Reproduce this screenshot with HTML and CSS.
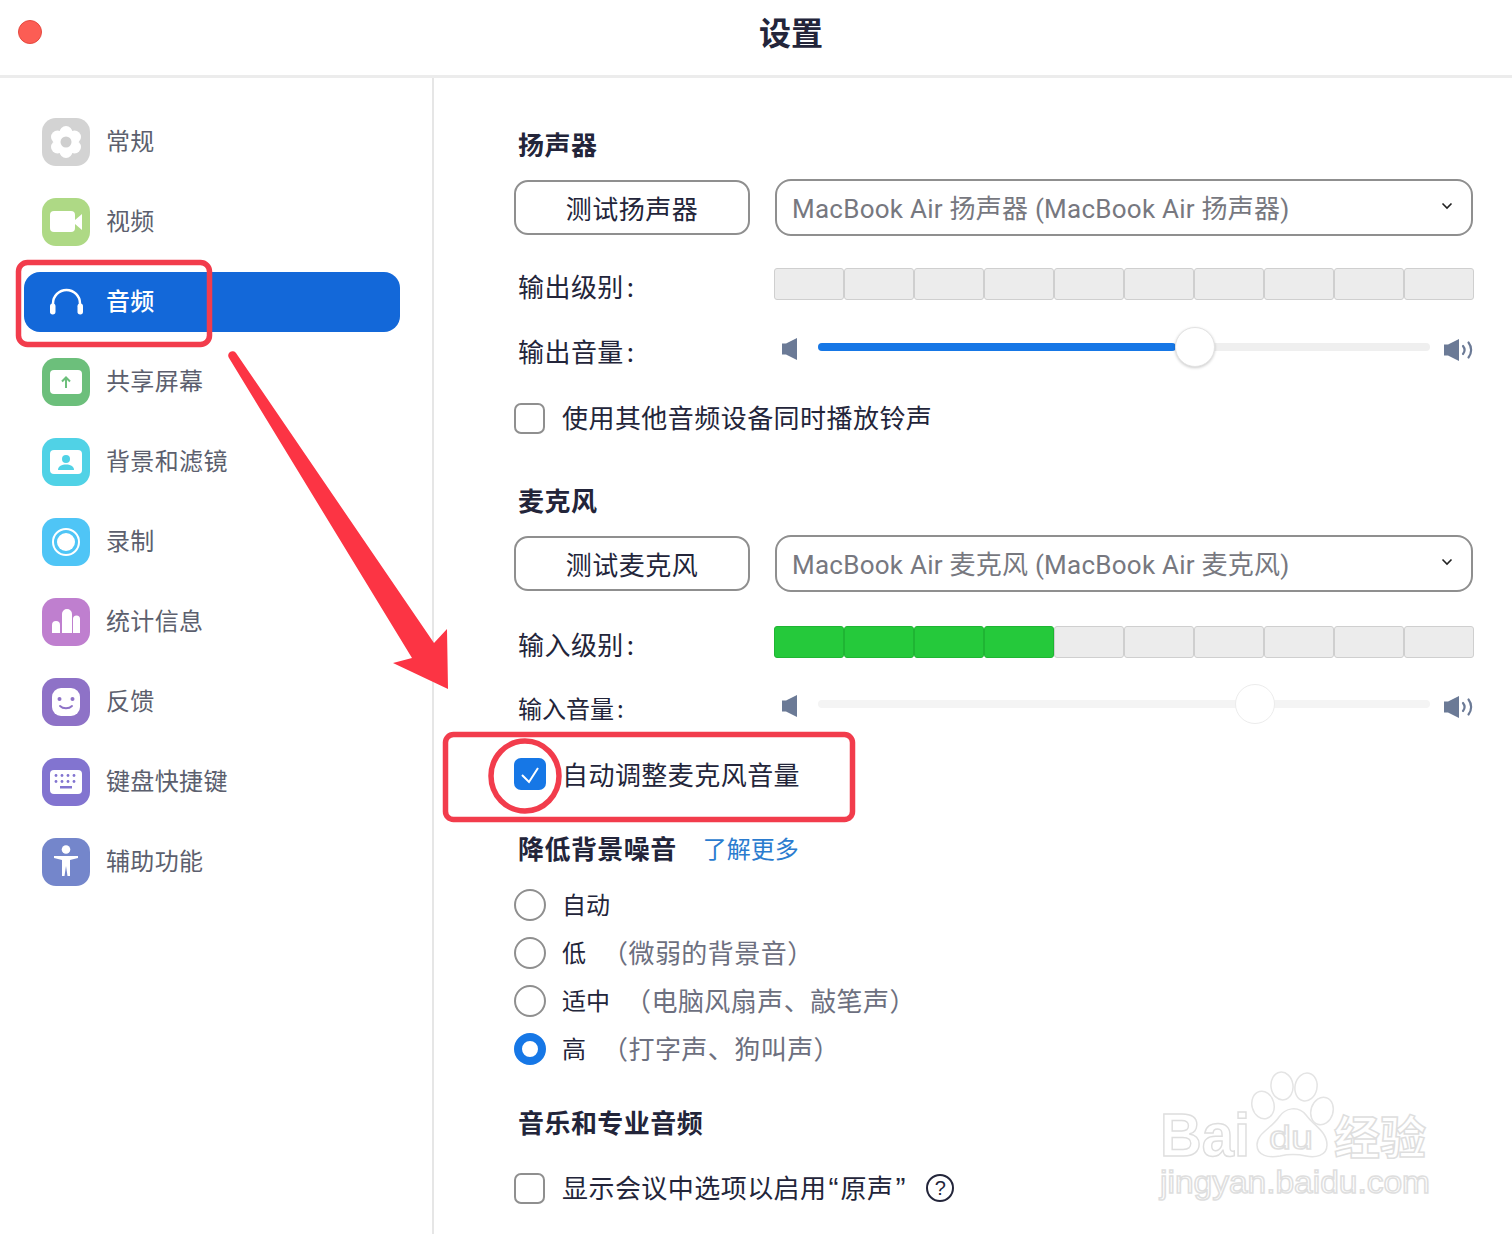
FILE: index.html
```html
<!DOCTYPE html>
<html lang="zh-CN">
<head>
    <meta charset="UTF-8">
    <title>设置</title>
    <link rel="stylesheet" href="styles.css">
</head>
<body>
    <div class="window">
        <header class="titlebar">
            <span class="close-dot"></span>
            <h1>设置</h1>
        </header>
        <div class="layout">
            <nav class="sidebar">
                <a class="nav-item">
                    <svg class="nav-icon" viewBox="0 0 48 48"><rect width="48" height="48" rx="14" fill="#d3d3d3"/><g fill="#fff"><circle cx="24" cy="14.500" r="6.500"/><circle cx="24" cy="33.500" r="6.500"/><circle cx="15.500" cy="19" r="6.500"/><circle cx="32.500" cy="19" r="6.500"/><circle cx="15.500" cy="29" r="6.500"/><circle cx="32.500" cy="29" r="6.500"/><circle cx="24" cy="24" r="10"/></g><circle cx="24" cy="24" r="5.500" fill="#cfcfcf"/></svg>
                    <span>常规</span>
                </a>
                <a class="nav-item">
                    <svg class="nav-icon" viewBox="0 0 48 48"><rect width="48" height="48" rx="14" fill="#aed985"/><rect x="8" y="13" width="25" height="21" rx="4" fill="#fff"/><path d="M33 22l7-6v16l-7-6z" fill="#fff"/></svg>
                    <span>视频</span>
                </a>
                <a class="nav-item active">
                    <svg class="nav-icon" viewBox="0 0 48 48"><path d="M11 33V25.500a13.500 13.500 0 0 1 27 0V33" fill="none" stroke="#fff" stroke-width="2.500"/><rect x="8" y="25.500" width="5.500" height="11" rx="2.700" fill="#fff"/><rect x="35.500" y="25.500" width="5.500" height="11" rx="2.700" fill="#fff"/></svg>
                    <span>音频</span>
                </a>
                <a class="nav-item">
                    <svg class="nav-icon" viewBox="0 0 48 48"><rect width="48" height="48" rx="14" fill="#6cbf7b"/><rect x="8" y="12" width="32" height="24" rx="4" fill="#fff"/><path d="M24 30v-10M20 23.500l4-4 4 4" fill="none" stroke="#6cbf7b" stroke-width="2"/></svg>
                    <span>共享屏幕</span>
                </a>
                <a class="nav-item">
                    <svg class="nav-icon" viewBox="0 0 48 48"><rect width="48" height="48" rx="14" fill="#50d2e6"/><rect x="8" y="12" width="32" height="24" rx="4" fill="#fff"/><circle cx="24" cy="21" r="4" fill="#50d2e6"/><path d="M16 32c0-4 4-5.500 8-5.500s8 1.500 8 5.500z" fill="#50d2e6"/></svg>
                    <span>背景和滤镜</span>
                </a>
                <a class="nav-item">
                    <svg class="nav-icon" viewBox="0 0 48 48"><rect width="48" height="48" rx="14" fill="#4fc5f6"/><circle cx="24" cy="24" r="13" fill="none" stroke="#fff" stroke-width="2"/><circle cx="24" cy="24" r="9" fill="#fff"/></svg>
                    <span>录制</span>
                </a>
                <a class="nav-item">
                    <svg class="nav-icon" viewBox="0 0 48 48"><rect width="48" height="48" rx="14" fill="#bf7fcf"/><path d="M10 35v-8a4 4 0 0 1 8 0v8zM20 35V16a5 5 0 0 1 10 0v19zM31 35V21a3.500 3.500 0 0 1 7 0v14z" fill="#fff"/></svg>
                    <span>统计信息</span>
                </a>
                <a class="nav-item">
                    <svg class="nav-icon" viewBox="0 0 48 48"><rect width="48" height="48" rx="14" fill="#8e72c7"/><rect x="10" y="10" width="28" height="28" rx="9" fill="#fff"/><circle cx="17.500" cy="21" r="2" fill="#8e72c7"/><circle cx="30.500" cy="21" r="2" fill="#8e72c7"/><path d="M18 28c3 3 9 3 12 0" fill="none" stroke="#8e72c7" stroke-width="1.800" stroke-linecap="round"/></svg>
                    <span>反馈</span>
                </a>
                <a class="nav-item">
                    <svg class="nav-icon" viewBox="0 0 48 48"><rect width="48" height="48" rx="14" fill="#8274d0"/><rect x="8" y="12" width="32" height="24" rx="4" fill="#fff"/><g fill="#8274d0"><circle cx="14" cy="17.500" r="1.400"/><circle cx="20" cy="17.500" r="1.400"/><circle cx="26" cy="17.500" r="1.400"/><circle cx="32" cy="17.500" r="1.400"/><circle cx="14" cy="23.500" r="1.400"/><circle cx="20" cy="23.500" r="1.400"/><circle cx="26" cy="23.500" r="1.400"/><circle cx="32" cy="23.500" r="1.400"/><rect x="18" y="28" width="12" height="2.500"/></g></svg>
                    <span>键盘快捷键</span>
                </a>
                <a class="nav-item">
                    <svg class="nav-icon" viewBox="0 0 48 48"><rect width="48" height="48" rx="14" fill="#7486cb"/><circle cx="24" cy="11.500" r="4.300" fill="#fff"/><path d="M12 18h24v2l-8 2v16h-2.500l-1.500-10-1.500 10H20V22l-8-2z" fill="#fff"/></svg>
                    <span>辅助功能</span>
                </a>
            </nav>

            <main class="content">
                <h2 class="section-title first">扬声器</h2>
                <div class="device-row">
                    <button class="test-btn">测试扬声器</button>
                    <div class="device-select">
                        <span>MacBook Air 扬声器 (MacBook Air 扬声器)</span>
                        <svg class="chevron" viewBox="0 0 12 8"><path d="M1.500 1.500L6 6l4.500-4.500" fill="none" stroke="#222" stroke-width="1.600"/></svg>
                    </div>
                </div>
                <div class="level-row output-level">
                    <span class="field-label">输出级别<span class="colon">:</span></span>
                    <div class="meter">
                        <i></i><i></i><i></i><i></i><i></i><i></i><i></i><i></i><i></i><i></i>
                    </div>
                </div>
                <div class="slider-row output-volume">
                    <span class="field-label">输出音量<span class="colon">:</span></span>
                    <svg class="vol-low" viewBox="0 0 16 22"><path d="M0 5.500h4l11-5.500v22l-11-5.500H0z" fill="#6b7a96"/></svg>
                    <div class="slider">
                        <div class="slider-fill"></div>
                        <div class="slider-thumb"></div>
                    </div>
                    <svg class="vol-high" viewBox="0 0 30 22"><path d="M0 5.500h4l11-5.500v22l-11-5.500H0z" fill="#6b7a96"/><path d="M19 7c2 2.500 2 5.500 0 8M24.500 3.500c3.500 4.500 3.500 10.500 0 15" fill="none" stroke="#6b7a96" stroke-width="2.200" stroke-linecap="round"/></svg>
                </div>
                <label class="check-row ringtone">
                    <span class="checkbox"></span>
                    <span class="check-text">使用其他音频设备同时播放铃声</span>
                </label>

                <h2 class="section-title mic-title">麦克风</h2>
                <div class="device-row">
                    <button class="test-btn">测试麦克风</button>
                    <div class="device-select">
                        <span>MacBook Air 麦克风 (MacBook Air 麦克风)</span>
                        <svg class="chevron" viewBox="0 0 12 8"><path d="M1.500 1.500L6 6l4.500-4.500" fill="none" stroke="#222" stroke-width="1.600"/></svg>
                    </div>
                </div>
                <div class="level-row input-level">
                    <span class="field-label">输入级别<span class="colon">:</span></span>
                    <div class="meter">
                        <i class="on"></i><i class="on"></i><i class="on"></i><i class="on"></i><i></i><i></i><i></i><i></i><i></i><i></i>
                    </div>
                </div>
                <div class="slider-row input-volume">
                    <span class="field-label small-label">输入音量<span class="colon">:</span></span>
                    <svg class="vol-low" viewBox="0 0 16 22"><path d="M0 5.500h4l11-5.500v22l-11-5.500H0z" fill="#6b7a96"/></svg>
                    <div class="slider">
                        <div class="slider-thumb"></div>
                    </div>
                    <svg class="vol-high" viewBox="0 0 30 22"><path d="M0 5.500h4l11-5.500v22l-11-5.500H0z" fill="#6b7a96"/><path d="M19 7c2 2.500 2 5.500 0 8M24.500 3.500c3.500 4.500 3.500 10.500 0 15" fill="none" stroke="#6b7a96" stroke-width="2.200" stroke-linecap="round"/></svg>
                </div>
                <label class="check-row auto-adjust">
                    <span class="checkbox checked">
                        <svg viewBox="0 0 32 32"><path d="M8 17l7 7 9-14" fill="none" stroke="#fff" stroke-width="2"/></svg>
                    </span>
                    <span class="check-text">自动调整麦克风音量</span>
                </label>

                <div class="noise-title">
                    <h2 class="section-title">降低背景噪音</h2>
                    <a class="learn-more">了解更多</a>
                </div>
                <div class="radio-list">
                    <label class="radio-row"><span class="radio"></span><span class="radio-name">自动</span></label>
                    <label class="radio-row"><span class="radio"></span><span class="radio-name">低</span><span class="radio-note low-note">（微弱的背景音）</span></label>
                    <label class="radio-row"><span class="radio"></span><span class="radio-name">适中</span><span class="radio-note mid-note">（电脑风扇声、敲笔声）</span></label>
                    <label class="radio-row"><span class="radio selected"></span><span class="radio-name">高</span><span class="radio-note low-note">（打字声、狗叫声）</span></label>
                </div>

                <h2 class="section-title music-title">音乐和专业音频</h2>
                <label class="check-row original-sound">
                    <span class="checkbox"></span>
                    <span class="check-text">显示会议中选项以启用<span class="quote">“</span>原声<span class="quote">”</span></span>
                    <span class="help">?</span>
                </label>
            </main>
        </div>
    </div>

    <!-- annotations drawn on top of the screenshot -->
    <svg class="overlay" viewBox="0 0 1512 1234">
        <g class="watermark">
            <g class="wm-paw">
                <ellipse cx="1263" cy="1105" rx="11" ry="14" transform="rotate(-15 1263 1105)"/>
                <ellipse cx="1282" cy="1086" rx="11" ry="14" transform="rotate(-8 1282 1086)"/>
                <ellipse cx="1306" cy="1087" rx="11" ry="14" transform="rotate(12 1306 1087)"/>
                <ellipse cx="1322" cy="1111" rx="11" ry="14" transform="rotate(18 1322 1111)"/>
                <path d="M1257 1145c0-12 14-16 22-28 6-9 19-12 27-2 7 10 21 16 21 30 0 11-12 13-21 11-9-2-17-2-26 0-11 2-23 0-23-11z"/>
            </g>
            <text class="wm-big" x="1160" y="1156" textLength="90" lengthAdjust="spacingAndGlyphs">Bai</text>
            <text class="wm-du" x="1269" y="1149" textLength="44" lengthAdjust="spacingAndGlyphs">du</text>
            <text class="wm-cn" x="1334" y="1154">经验</text>
            <text class="wm-url" x="1160" y="1193" textLength="270" lengthAdjust="spacingAndGlyphs">jingyan.baidu.com</text>
        </g>
        <rect class="mark" x="18.500" y="262.500" width="191" height="82" rx="9"/>
        <rect class="mark" x="445.500" y="734.500" width="407" height="85" rx="8"/>
        <ellipse class="mark" cx="525" cy="776" rx="34" ry="35"/>
        <path class="arrow" d="M229 358a4 4 0 0 1 7-5L434 643l13-14 1 60-55-26 19-5z"/>
    </svg>
</body>
</html>
```

FILE: styles.css
```css
* {
    box-sizing: border-box;
}

html, body {
    margin: 0;
    padding: 0;
    background: #fff;
    overflow: hidden;
}

body {
    position: relative;
    width: 1512px;
    height: 1234px;
    font-family: "Noto Sans CJK SC", "Noto Sans", sans-serif;
    color: #23253a;
}

.window {
    height: 1234px;
    display: flex;
    flex-direction: column;
}

.titlebar {
    height: 78px;
    flex: none;
    border-bottom: 3px solid #ececec;
    display: flex;
    align-items: center;
    justify-content: center;
    position: relative;
    padding: 0 0 14px 70px;
}

.titlebar h1 {
    margin: 0;
    font-size: 32px;
    line-height: 40px;
    font-weight: 700;
    color: #23253a;
}

.close-dot {
    position: absolute;
    left: 18px;
    top: 20px;
    width: 24px;
    height: 24px;
    border-radius: 50%;
    background: #fc5d54;
    border: 1px solid #e5493f;
}

.layout {
    flex: 1;
    display: flex;
    min-height: 0;
}

/* left column */
.sidebar {
    width: 434px;
    flex: none;
    border-right: 2px solid #e6e6e6;
    padding: 34px 32px 0 24px;
    display: flex;
    flex-direction: column;
    gap: 20px;
}

.nav-item {
    height: 60px;
    display: flex;
    align-items: center;
    gap: 16px;
    padding-left: 18px;
    border-radius: 16px;
    font-size: 24px;
    letter-spacing: 0.35px;
    color: #5c5f6e;
}

.nav-item span {
    margin-top: -5px;
}

.nav-item.active {
    background: #1368d9;
    color: #fff;
    font-weight: 500;
}

.nav-icon {
    width: 48px;
    height: 48px;
    flex: none;
}

/* right column */
.content {
    flex: 1;
    padding: 0 38px 0 80px;
    font-size: 26px;
    letter-spacing: 0.45px;
    min-width: 0;
}

.section-title {
    margin: 0 0 0 4px;
    height: 36px;
    font-size: 26px;
    line-height: 34px;
    font-weight: 700;
    color: #23253a;
}

.section-title.first {
    margin-top: 49px;
}

.section-title.mic-title {
    margin-top: 50px;
}

.section-title.music-title {
    margin-top: 40px;
}

.device-row {
    margin-top: 16px;
    margin-right: 1px;
    height: 56px;
    display: flex;
    align-items: center;
    gap: 25px;
}

.test-btn {
    width: 236px;
    height: 55px;
    flex: none;
    margin-top: 1px;
    padding: 0;
    background: #fff;
    border: 2px solid #8f8f8f;
    border-radius: 14px;
    font: inherit;
    letter-spacing: inherit;
    color: #23253a;
}

.device-select {
    flex: 1;
    height: 57px;
    border: 2px solid #8f8f8f;
    border-radius: 16px;
    display: flex;
    align-items: center;
    justify-content: space-between;
    padding: 0 18px 1px 15px;
    color: #77787f;
    font-family: "Roboto", "Noto Sans CJK SC", sans-serif;
    letter-spacing: 0.25px;
}

.chevron {
    width: 12px;
    height: 8px;
    flex: none;
    margin-top: -2px;
}

.field-label {
    width: 256px;
    flex: none;
    padding-left: 4px;
    color: #23253a;
    line-height: 36px;
}

.small-label {
    font-size: 24px;
    letter-spacing: 0;
}

.colon {
    margin-left: 3px;
}

.level-row {
    height: 32px;
    display: flex;
    align-items: center;
}

.level-row .field-label {
    position: relative;
    top: 2px;
}

.output-level {
    margin-top: 33px;
}

.input-level {
    margin-top: 35px;
}

.meter {
    width: 700px;
    height: 32px;
    flex: none;
    margin-left: 4px;
    display: flex;
}

.meter i {
    flex: 1;
    background: #ececec;
    border: 1px solid #cfcfcf;
    border-radius: 3px;
}

.meter i.on {
    background: #25c93b;
    border-color: #1fb533;
}

.slider-row {
    height: 40px;
    display: flex;
    align-items: center;
}

.slider-row .field-label {
    position: relative;
    top: 4px;
}

.output-volume {
    margin-top: 27px;
}

.input-volume {
    margin-top: 26px;
}

.vol-low {
    width: 16px;
    height: 22px;
    flex: none;
    margin: 4px 0 0 12px;
}

.slider {
    width: 612px;
    height: 8px;
    flex: none;
    margin-left: 20px;
    background: #efefef;
    border-radius: 4px;
    position: relative;
}

.input-volume .slider {
    background: #f4f4f4;
}

.slider-fill {
    width: 358px;
    height: 8px;
    background: #1677e6;
    border-radius: 4px;
}

.slider-thumb {
    position: absolute;
    left: 357px;
    top: -16px;
    width: 40px;
    height: 40px;
    border-radius: 50%;
    background: #fff;
    border: 1px solid #e3e3e3;
    box-shadow: 0 1px 3px rgba(0, 0, 0, 0.2);
}

.input-volume .slider-thumb {
    left: 417px;
    border-color: #ececec;
    box-shadow: none;
}

.vol-high {
    width: 30px;
    height: 22px;
    flex: none;
    margin: 6px 0 0 14px;
}

.check-row {
    height: 30px;
    display: flex;
    align-items: center;
    gap: 17px;
    color: #23253a;
}

.check-text {
    margin-top: -3px;
}

.quote {
    padding: 0 2px;
    font-family: "Liberation Sans", sans-serif;
    font-size: 30px;
    line-height: 1;
    letter-spacing: 0;
}

.ringtone {
    margin-top: 36px;
}

.auto-adjust {
    margin-top: 36px;
}

.original-sound {
    margin-top: 32px;
}

.checkbox {
    width: 31px;
    height: 31px;
    flex: none;
    border: 2px solid #8f8f8f;
    border-radius: 7px;
    background: #fff;
}

.checkbox.checked {
    width: 32px;
    height: 32px;
    margin: -3px -1px 0 0;
    background: #1677e6;
    border: none;
}

.checkbox.checked svg {
    display: block;
    width: 32px;
    height: 32px;
}

.noise-title {
    margin-top: 41px;
    height: 36px;
    display: flex;
    align-items: center;
    gap: 26px;
}

.learn-more {
    margin-top: -4px;
    font-size: 24px;
    letter-spacing: 0;
    color: #2b7ccf;
}

.radio-list {
    margin-top: 22px;
    display: flex;
    flex-direction: column;
    gap: 16px;
}

.radio-row {
    height: 32px;
    display: flex;
    align-items: center;
    font-size: 24px;
    color: #23253a;
}

.radio {
    width: 32px;
    height: 32px;
    flex: none;
    margin-right: 16px;
    border: 2px solid #8f8f8f;
    border-radius: 50%;
    background: #fff;
}

.radio.selected {
    border: 8px solid #1677e6;
}

.radio-name {
    margin-top: -4px;
    letter-spacing: 0;
}

.radio-note {
    margin-top: -4px;
    color: #6d7080;
    font-size: 26px;
}

.low-note {
    margin-left: 16px;
}

.mid-note {
    margin-left: 15px;
}

.help {
    width: 28px;
    height: 28px;
    margin-left: 2px;
    border: 2px solid #23253a;
    border-radius: 50%;
    font-size: 20px;
    line-height: 24px;
    text-align: center;
    letter-spacing: 0;
    font-family: "Liberation Sans", sans-serif;
}

/* red marks and watermark */
.overlay {
    position: absolute;
    left: 0;
    top: 0;
    width: 1512px;
    height: 1234px;
    pointer-events: none;
}

.mark {
    fill: none;
    stroke: #f23c4c;
    stroke-width: 5.500;
}

.arrow {
    fill: #fc3444;
}

.wm-paw ellipse, .wm-paw path {
    fill: #fff;
    stroke: #e4e4e4;
    stroke-width: 1.500;
}

.watermark text {
    fill: #fff;
    stroke: #dedede;
    stroke-width: 1.500;
}

.wm-big {
    font: 700 62px "Liberation Sans", sans-serif;
}

.wm-du {
    font: 400 34px "Liberation Sans", sans-serif;
}

.wm-cn {
    font: 700 46px "Noto Sans CJK SC", sans-serif;
}

.wm-url {
    font: 400 32px "Liberation Sans", sans-serif;
}
```
